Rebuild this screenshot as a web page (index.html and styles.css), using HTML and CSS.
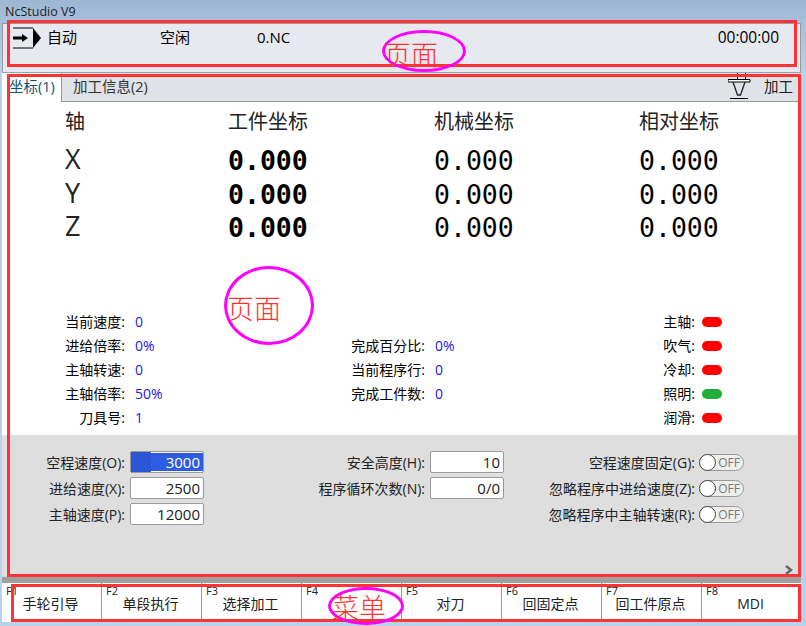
FILE: index.html
```html
<!DOCTYPE html>
<html lang="zh-CN">

<head>
  <meta charset="UTF-8">
  <title>NcStudio V9</title>
  <link rel="stylesheet" href="styles.css">
</head>

<body>
  <div class="titleBar">NcStudio V9</div>

  <div class="window">
    <div class="statusPanel">
      <svg class="modeIcon" width="30" height="22" viewBox="0 0 30 22">
        <path d="M0 1H20M0 21H20" fill="none" stroke="#000" />
        <path d="M20 1V21L28 11Z" fill="#000" />
        <path d="M0 9.500H9V7L15 11L9 15V12.500H0Z" fill="#000" />
      </svg>
      <span class="mode">自动</span>
      <span class="state">空闲</span>
      <span class="file">0.NC</span>
      <span class="clock">00:00:00</span>
    </div>

    <div class="tabBar">
      <div class="tab active">坐标(1)</div>
      <div class="tab">加工信息(2)</div>
      <div class="tabRight">
        <svg width="23" height="27" viewBox="0 0 23 27">
          <path d="M9.500 0V6M17.500 0V6" fill="none" stroke="#000" />
          <path d="M0 6.500H22V9H0Z" fill="#fff" stroke="#000" />
          <path d="M5 9L9.500 22H12.500L17 9" fill="none" stroke="#222" stroke-width="1.300" />
          <path d="M2 25.500H20" stroke="#000" />
        </svg>
        <span>加工</span>
      </div>
    </div>

    <div class="coordPage">
      <div class="coordGrid">
        <div class="coordHead">轴</div>
        <div class="coordHead">工件坐标</div>
        <div class="coordHead">机械坐标</div>
        <div class="coordHead">相对坐标</div>

        <div class="axis">X</div>
        <div class="num bold">0.000</div>
        <div class="num">0.000</div>
        <div class="num">0.000</div>

        <div class="axis">Y</div>
        <div class="num bold">0.000</div>
        <div class="num">0.000</div>
        <div class="num">0.000</div>

        <div class="axis">Z</div>
        <div class="num bold">0.000</div>
        <div class="num">0.000</div>
        <div class="num">0.000</div>
      </div>

      <div class="infoArea">
        <div class="infoCol col1">
          <div class="info"><label>当前速度:</label><b>0</b></div>
          <div class="info"><label>进给倍率:</label><b>0%</b></div>
          <div class="info"><label>主轴转速:</label><b>0</b></div>
          <div class="info"><label>主轴倍率:</label><b>50%</b></div>
          <div class="info"><label>刀具号:</label><b>1</b></div>
        </div>
        <div class="infoCol col2">
          <div class="info"><label>完成百分比:</label><b>0%</b></div>
          <div class="info"><label>当前程序行:</label><b>0</b></div>
          <div class="info"><label>完成工件数:</label><b>0</b></div>
        </div>
        <div class="infoCol col3">
          <div class="info"><label>主轴:</label><i class="lamp"></i></div>
          <div class="info"><label>吹气:</label><i class="lamp"></i></div>
          <div class="info"><label>冷却:</label><i class="lamp"></i></div>
          <div class="info"><label>照明:</label><i class="lamp on"></i></div>
          <div class="info"><label>润滑:</label><i class="lamp"></i></div>
        </div>
      </div>

      <div class="paramArea">
        <div class="paramCol pcol1">
          <div class="param"><label>空程速度(O):</label><div class="field selected"><span class="sel"></span><span class="val">3000</span></div></div>
          <div class="param"><label>进给速度(X):</label><div class="field"><span class="val">2500</span></div></div>
          <div class="param"><label>主轴速度(P):</label><div class="field"><span class="val">12000</span></div></div>
        </div>
        <div class="paramCol pcol2">
          <div class="param"><label>安全高度(H):</label><div class="field"><span class="val">10</span></div></div>
          <div class="param"><label>程序循环次数(N):</label><div class="field"><span class="val">0/0</span></div></div>
        </div>
        <div class="paramCol pcol3">
          <div class="param"><label>空程速度固定(G):</label><div class="toggle"><i></i>OFF</div></div>
          <div class="param"><label>忽略程序中进给速度(Z):</label><div class="toggle"><i></i>OFF</div></div>
          <div class="param"><label>忽略程序中主轴转速(R):</label><div class="toggle"><i></i>OFF</div></div>
        </div>
        <svg class="more" width="10" height="10" viewBox="0 0 10 10">
          <path d="M2 1L7 5L2 9" fill="none" stroke="#666" stroke-width="2.500" />
        </svg>
      </div>
    </div>

    <div class="menuBar">
      <div class="menuBtn"><small>F1</small>手轮引导</div>
      <div class="menuBtn"><small>F2</small>单段执行</div>
      <div class="menuBtn"><small>F3</small>选择加工</div>
      <div class="menuBtn"><small>F4</small></div>
      <div class="menuBtn"><small>F5</small>对刀</div>
      <div class="menuBtn"><small>F6</small>回固定点</div>
      <div class="menuBtn"><small>F7</small>回工件原点</div>
      <div class="menuBtn"><small>F8</small>MDI</div>
    </div>
  </div>

  <!-- red notes drawn over the screenshot -->
  <div class="box box1"></div>
  <div class="box box2"></div>
  <div class="box box3"></div>
  <div class="ring ring1"></div>
  <div class="ring ring2"></div>
  <div class="ring ring3"></div>
  <div class="note note1">页面</div>
  <div class="note note2">页面</div>
  <div class="note note3">菜单</div>
</body>

</html>
```

FILE: styles.css
```css
body {
  margin: 0;
  width: 806px;
  height: 626px;
  position: relative;
  overflow: hidden;
  font-family: "Open Sans", "Noto Sans CJK SC", sans-serif;
  font-size: 14px;
  color: #000;
  background: linear-gradient(#9db6d3, #b9d2ea 70px);
}

.titleBar {
  height: 23px;
  line-height: 23px;
  padding-left: 5px;
  font-size: 12.500px;
  color: #222;
}

.window {
  margin: 0 5px 0 2px;
  height: 599px;
  background: #a0a0a0;
  display: flex;
  flex-direction: column;
}

.statusPanel {
  height: 49px;
  margin: 0 0 1px;
  padding: 3px 0 0 10px;
  box-sizing: border-box;
  border: 1px solid #999;
  border-bottom: none;
  background: #e6e9ef;
  display: flex;
  align-items: flex-start;
  font-size: 15px;
  line-height: 20px;
}

.modeIcon {
  width: 30px;
  height: 22px;
}

.mode {
  margin-left: 4px;
  width: 113px;
}

.state {
  width: 97px;
}

.clock {
  margin-left: auto;
  margin-right: 21px;
  font-size: 15.500px;
}

.tabBar {
  height: 29px;
  display: flex;
  box-sizing: border-box;
  background: #dfe2e7;
  border-bottom: 1px solid #999;
  font-size: 14.500px;
}

.tab {
  padding: 0 11px;
  line-height: 27px;
  color: #333;
}

.tab.active {
  width: 60px;
  box-sizing: border-box;
  padding: 0 0 0 7px;
  height: 29px;
  background: #fff;
  color: #12506e;
  border-right: 1px solid #999;
  white-space: nowrap;
}

.tabRight {
  margin-left: auto;
  margin-right: 8px;
  display: flex;
  gap: 13px;
  line-height: 27px;
  color: #222;
}

.coordPage {
  flex: 1;
  background: #fff;
  display: flex;
  flex-direction: column;
}

.coordGrid {
  height: 207px;
  padding: 6px 0 0 63px;
  box-sizing: border-box;
  display: grid;
  grid-template-columns: 163px 206px 205px 1fr;
  grid-template-rows: 36px 33.500px 33.500px 33.500px;
}

.coordHead {
  font-size: 20px;
  line-height: 28px;
  color: #222;
}

.axis {
  font-size: 27px;
  line-height: 30px;
  color: #222;
}

.num {
  font-family: "DejaVu Sans Mono", monospace;
  font-size: 26.500px;
  line-height: 33px;
}

.num.bold {
  font-weight: bold;
}

.infoArea {
  height: 126px;
  display: flex;
}

.infoCol {
  display: flex;
  flex-direction: column;
}

.info {
  height: 24px;
  display: flex;
  align-items: center;
  white-space: nowrap;
}

.info label {
  text-align: right;
}

.info b {
  font-weight: normal;
  color: #1a1ae0;
  margin-left: 10px;
}

.col1 {
  width: 345px;
}

.col1 label {
  width: 123px;
}

.col2 {
  width: 311px;
  padding-top: 24px;
}

.col2 label {
  width: 78px;
}

.col3 label {
  width: 37px;
}

.lamp {
  width: 20px;
  height: 10px;
  border-radius: 5px;
  margin: 2px 0 0 7px;
  background: #f00;
}

.lamp.on {
  background: #22ac38;
}

.paramArea {
  flex: 1;
  position: relative;
  background: #dedede;
  display: flex;
  padding-top: 16px;
  color: #222;
}

.paramCol {
  display: flex;
  flex-direction: column;
  gap: 4px;
}

.param {
  height: 22px;
  display: flex;
  align-items: center;
  white-space: nowrap;
}

.param label {
  text-align: right;
}

.pcol1 {
  width: 307px;
}

.pcol1 label {
  width: 123px;
}

.pcol2 {
  width: 196px;
}

.pcol2 label {
  width: 116px;
}

.pcol3 label {
  width: 190px;
}

.field {
  width: 72px;
  height: 20px;
  margin-left: 5px;
  position: relative;
  border: 1px solid #999;
  border-radius: 2px;
  background: #fff;
  text-align: right;
  line-height: 20px;
  font-size: 15px;
  color: #222;
}

.field.selected {
  background: #2e5ce0;
  box-shadow: inset 0 1px #fff, inset 0 -1px #fff;
  color: #fff;
}

.sel {
  position: absolute;
  left: 0;
  top: 0;
  width: 20px;
  height: 20px;
  background: #2a56d6;
}

.val {
  position: relative;
  padding-right: 3px;
}

.toggle {
  width: 45px;
  height: 17px;
  margin-left: 4px;
  display: flex;
  align-items: center;
  justify-content: flex-end;
  padding-right: 3px;
  box-sizing: border-box;
  border: 1px solid #999;
  border-radius: 9px;
  background: #eee;
  font-size: 12px;
  color: #777;
  position: relative;
}

.toggle i {
  position: absolute;
  left: -1px;
  top: -1px;
  width: 17px;
  height: 17px;
  box-sizing: border-box;
  border: 1px solid #444;
  border-radius: 50%;
  background: #fff;
}

.more {
  position: absolute;
  right: 7px;
  bottom: 2px;
}

.menuBar {
  height: 39px;
  margin-top: 6px;
  display: flex;
  background: #fff;
}

.menuBtn {
  flex: 1;
  position: relative;
  border-right: 1px solid #999;
  box-sizing: border-box;
  text-align: center;
  line-height: 38px;
  padding: 2px 2px 0 0;
  color: #222;
}

.menuBtn:last-child {
  border-right: none;
}

.menuBtn small {
  position: absolute;
  left: 4px;
  top: 2px;
  font-size: 11px;
  line-height: 12px;
}

/* annotations */
.box {
  position: absolute;
  border: 3px solid #f33;
  box-sizing: border-box;
}

.box1 {
  left: 7px;
  top: 20px;
  width: 790px;
  height: 47px;
}

.box2 {
  left: 7px;
  top: 74px;
  width: 794px;
  height: 503px;
}

.box3 {
  left: 11px;
  top: 584px;
  width: 790px;
  height: 38px;
}

.ring {
  position: absolute;
  border: 3px solid #f0f;
  border-radius: 50%;
  box-sizing: border-box;
}

.ring1 {
  left: 382px;
  top: 30px;
  width: 84px;
  height: 42px;
}

.ring2 {
  left: 224px;
  top: 266px;
  width: 90px;
  height: 79px;
}

.ring3 {
  left: 328px;
  top: 587px;
  width: 76px;
  height: 38px;
}

.note {
  position: absolute;
  color: #f33;
  font-size: 27px;
  font-weight: 300;
  line-height: 30px;
}

.note1 {
  left: 384px;
  top: 40px;
}

.note2 {
  left: 227px;
  top: 294px;
}

.note3 {
  left: 332px;
  top: 593px;
}
```
